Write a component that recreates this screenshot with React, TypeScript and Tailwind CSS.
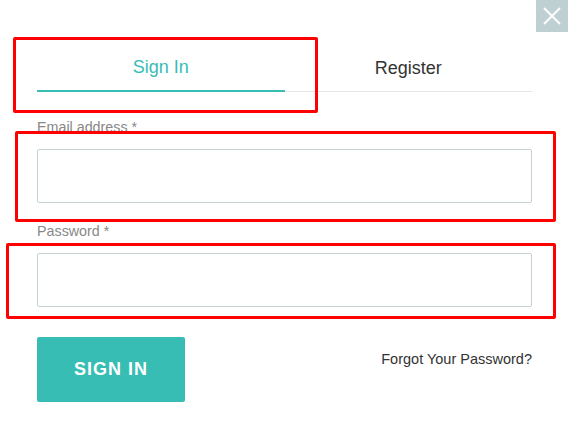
import React from 'react';

const App: React.FC = () => {
  return (
    <div className="relative w-[568px] h-[445px] bg-white overflow-hidden font-['Liberation_Sans',Arial,sans-serif]">
      {/* Close button */}
      <button className="absolute top-0 right-0 w-8 h-8 bg-[#bfd0d3] flex items-center justify-center">
        <svg width="18" height="18" viewBox="0 0 18 18" fill="none" stroke="white" strokeWidth="1.8">
          <path d="M1 1L17 17M17 1L1 17" />
        </svg>
      </button>

      <div className="pl-[37px] pr-[36px] pt-[45px] flex flex-col">
        {/* Tabs */}
        <div className="flex border-b border-[#e6e6e6]">
          <div className="flex-1 h-[47px] -mb-px flex items-center justify-center border-b-2 border-[#38bdb4] text-[18px] text-[#38bdb4]">
            Sign In
          </div>
          <div className="flex-1 h-[47px] -mb-px flex items-center justify-center text-[18px] text-[#333]">
            Register
          </div>
        </div>

        <label className="mt-[25px] text-[14.3px] leading-5 text-[#888]">Email address *</label>
        <input className="mt-[12px] h-[54px] w-full border border-[#c5d3d4] rounded-[2px] outline-none" type="email" />

        <label className="mt-[18px] text-[14.3px] leading-5 text-[#888]">Password *</label>
        <input className="mt-[12px] h-[54px] w-full border border-[#c5d3d4] rounded-[2px] outline-none" type="password" />

        <div className="mt-[30px] flex items-start justify-between">
          <button className="w-[148px] h-[65px] bg-[#38bdb4] rounded-[2px] text-white text-[18px] font-bold tracking-[1px]">
            SIGN IN
          </button>
          <a className="mt-[12px] text-[14.5px] leading-5 text-[#333]">Forgot Your Password?</a>
        </div>
      </div>

      {/* Red annotation boxes */}
      <div className="absolute left-[13px] top-[37px] w-[305px] h-[76px] border-[3px] border-[#ff0000] rounded-[2px]" />
      <div className="absolute left-[15px] top-[131px] w-[541px] h-[91px] border-[3px] border-[#ff0000] rounded-[2px]" />
      <div className="absolute left-[6px] top-[243px] w-[550px] h-[76px] border-[3px] border-[#ff0000] rounded-[2px]" />
    </div>
  );
};

export default App;
